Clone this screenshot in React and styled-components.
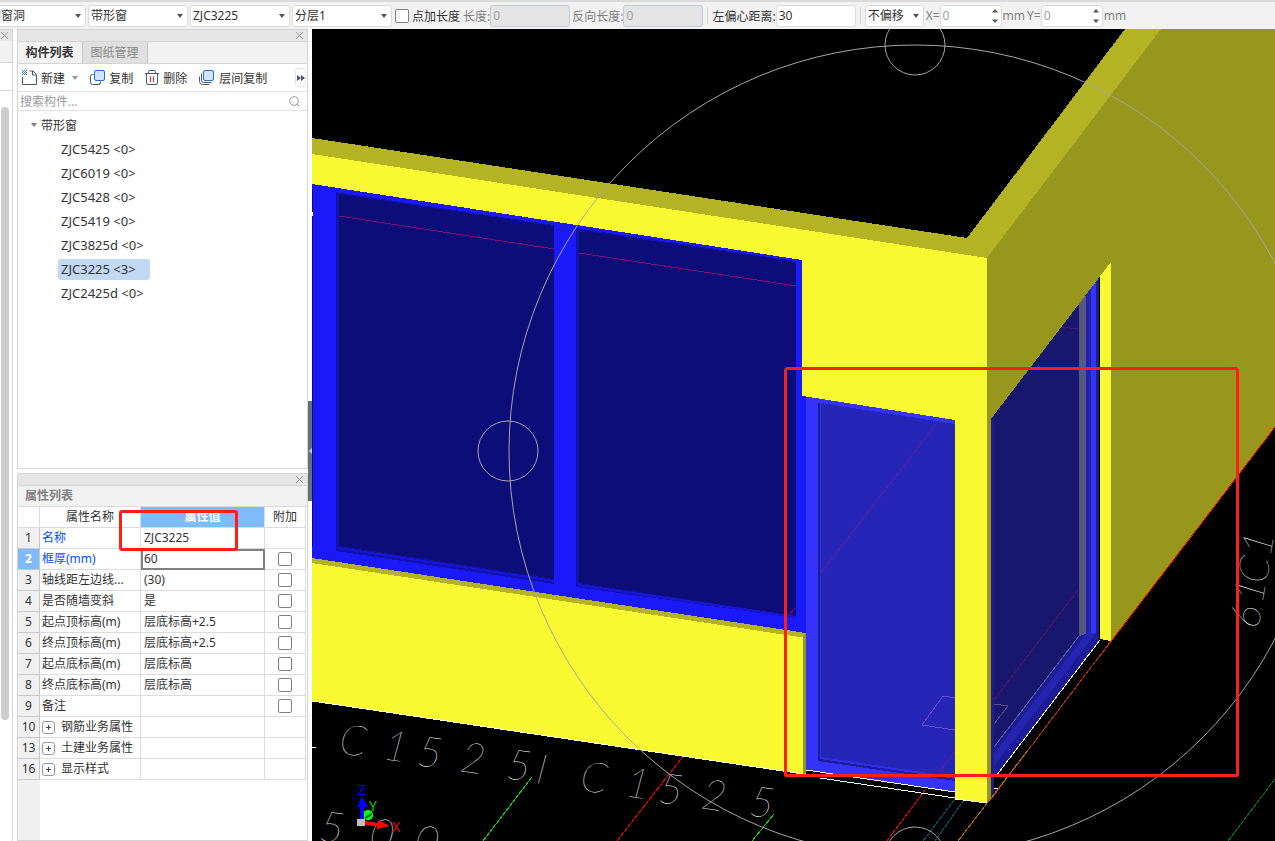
import {useState} from "react";
import styled, {createGlobalStyle} from "styled-components";

const GlobalStyle = createGlobalStyle`
    * {
        box-sizing: border-box;
    }

    body {
        margin: 0;
        overflow: hidden;
        background-color: #f2f2f2;
        color: #333;
    }

    body, button, input, select {
        font-family: "Noto Sans", "Noto Sans CJK SC", sans-serif;
        font-size: 12px;
    }

    button, input, select {
        color: inherit;
    }
`;

const Shell = styled.div`
    display: flex;
    flex-direction: column;
    height: 100vh;
    overflow: hidden;
`;

/* ---------- top bar ---------- */

const TopBar = styled.div`
    display: flex;
    align-items: center;
    flex: none;
    height: 29px;
    border-top: 2px solid #dadada;
    white-space: nowrap;
    overflow: hidden;
`;

const SelectBox = styled.div`
    position: relative;
    flex: none;
    width: ${(p) => (p.$compact ? 59 : 100)}px;
    margin-right: 2px;

    &:first-child {
        margin-left: -14px;
    }

    svg {
        position: absolute;
        right: 5px;
        top: 9px;
        pointer-events: none;
    }
`;

const Select = styled.select`
    appearance: none;
    width: 100%;
    height: 22px;
    padding: 0 2px;
    border: 1px solid #dcdcdc;
    border-radius: 3px;
    background-color: #fff;
`;

const CheckBox = styled.input`
    appearance: none;
    display: block;
    flex: none;
    width: 14px;
    height: 14px;
    margin: 0 auto;
    border: 1px solid #808080;
    border-radius: 2px;
    background-color: #fff;

    &:checked {
        background-color: #7fbafa;
    }
`;

const CheckLabel = styled.label`
    display: flex;
    align-items: center;
    gap: 3px;
    margin: 0 3px 0 1px;
`;

const Field = styled.label`
    display: flex;
    align-items: center;
    margin-right: 2px;
    color: ${(p) => (p.$muted ? "#808080" : "inherit")};
`;

const TextInput = styled.input`
    width: 80px;
    height: 22px;
    padding: 0 2px;
    border: 1px solid #dcdcdc;
    border-radius: 3px;
    background-color: #fff;

    &:disabled {
        border-color: #c3cad8;
        background-color: #e5e5e5;
        color: #a0a0a0;
    }
`;

const Spinner = styled.span`
    display: flex;
    align-items: center;
    justify-content: space-between;
    width: 62px;
    height: 22px;
    margin-right: 1px;
    padding-right: 3px;
    border: 1px solid #dcdcdc;
    border-radius: 3px;
    background-color: #fff;

    input {
        width: 40px;
        padding: 0 2px;
        border: 0;
        color: #a0a0a0;
        background: none;
    }
`;

const Divider = styled.span`
    width: 1px;
    height: 17px;
    margin: 0 4px 0 2px;
    background-color: #d4d4d4;
`;

const Caret = ({color = "#555"}) => (
    <svg width="6" height="4" viewBox="0 0 6 4"><path d="M0 0h6L3 4z" fill={color}/></svg>
);

const CloseIcon = () => (
    <svg width="7" height="7" viewBox="0 0 7 7"><path d="M0 0l7 7M7 0L0 7" stroke="#999"/></svg>
);

const DropDown = ({label, value, compact}) => (
    <SelectBox $compact={compact}>
        <Select aria-label={label} defaultValue={value}>
            <option>{value}</option>
        </Select>
        <Caret/>
    </SelectBox>
);

const OffsetField = ({axis}) => (
    <Field $muted>
        {axis}=
        <Spinner>
            <input defaultValue="0"/>
            <svg width="6" height="14" viewBox="0 0 6 14">
                <path d="M0 3.5h6L3 0zM0 10.5h6L3 14z" fill="#555"/>
            </svg>
        </Spinner>
        mm
    </Field>
);

const Toolbar = () => {
    const [addLength, setAddLength] = useState(false);

    return (
        <TopBar>
            <DropDown label="类别" value="门窗洞"/>
            <DropDown label="类型" value="带形窗"/>
            <DropDown label="构件" value="ZJC3225"/>
            <DropDown label="分层" value="分层1"/>
            <CheckLabel>
                <CheckBox type="checkbox" checked={addLength} onChange={() => setAddLength(!addLength)}/>
                点加长度
            </CheckLabel>
            <Field $muted>长度:<TextInput defaultValue="0" disabled={!addLength}/></Field>
            <Field $muted>反向长度:<TextInput defaultValue="0" disabled={!addLength}/></Field>
            <Divider/>
            <Field>左偏心距离:<TextInput defaultValue="30"/></Field>
            <Divider/>
            <DropDown label="偏移" value="不偏移" compact/>
            <OffsetField axis="X"/>
            <OffsetField axis="Y"/>
        </TopBar>
    );
};

/* ---------- side panels ---------- */

const Main = styled.div`
    display: flex;
    flex: 1;
    min-height: 0;
`;

const Strip = styled.div`
    display: flex;
    flex-direction: column;
    flex: none;
    width: 13px;
    border-right: 1px solid #d4d4d4;
    background-color: #fff;
`;

const StripTitle = styled.div`
    display: grid;
    place-items: center start;
    flex: none;
    height: 12px;
    padding-left: 1px;
    border-top: 1px solid #d4d4d4;
    background-color: #e6e6e6;
`;

const StripCell = styled.div`
    flex: none;
    height: ${(p) => p.$height}px;
    border-bottom: 1px solid #d4d4d4;
    background-color: ${(p) => p.$fill || "#fff"};
`;

const StripScroll = styled.div`
    flex: 1;
    margin: 16px 3px 121px 1px;
    border-radius: 4px;
    background-color: #cdcdcd;
`;

const Side = styled.div`
    display: flex;
    flex-direction: column;
    flex: none;
    gap: 4px;
    width: 295px;
    padding: 0 0 0 4px;
    background-color: #fff;
`;

const Panel = styled.section`
    position: relative;
    display: flex;
    flex-direction: column;
    min-height: 0;
    flex: ${(p) => p.$flex};
    border: 1px solid #d4d4d4;
    background-color: #fff;
`;

const PanelStrip = styled.div`
    display: flex;
    align-items: center;
    justify-content: flex-end;
    flex: none;
    height: 11px;
    padding-right: 4px;
    background-color: #e6e6e6;

    button {
        display: grid;
        padding: 0;
        border: 0;
        background: none;
    }
`;

const Tabs = styled.div`
    display: flex;
    flex: none;
    height: 23px;
    border-top: 1px solid #d4d4d4;
    border-bottom: 1px solid #d4d4d4;
    background-color: #f2f2f2;
`;

const Tab = styled.button`
    width: 65px;
    padding: 0 1px 1px 0;
    border: 0;
    border-right: 1px solid #c3c6cc;
    background-color: ${(p) => (p.$active ? "#f2f2f2" : "#e0e0e0")};
    color: ${(p) => (p.$active ? "#333" : "#888")};
    font-weight: ${(p) => (p.$active ? 700 : 400)};
`;

const Actions = styled.div`
    display: flex;
    align-items: center;
    flex: none;
    height: 28px;
    padding: 0 1px 0 4px;
    border-bottom: 1px solid #e2e2e2;
`;

const Action = styled.button`
    display: flex;
    align-items: center;
    gap: 4px;
    margin-right: 12px;
    padding: 0;
    border: 0;
    background: none;
    white-space: nowrap;
`;

const MoreButton = styled.button`
    display: grid;
    place-items: center;
    width: 11px;
    height: 19px;
    margin-left: auto;
    padding: 0;
    border: 1px solid #e6e6e6;
    border-radius: 3px;
    background: #fff;
`;

const Search = styled.label`
    display: flex;
    align-items: center;
    flex: none;
    height: 19px;
    padding: 0 7px 0 2px;
    border-bottom: 1px solid #e2e2e2;

    input {
        flex: 1;
        min-width: 0;
        padding: 0;
        border: 0;
        outline: 0;
    }

    input::placeholder {
        color: #999;
    }
`;

const Tree = styled.ul`
    flex: 1;
    margin: 0;
    padding: 2px 0 0 13px;
    list-style: none;
    overflow: hidden;
`;

const TreeGroup = styled.li`
    display: flex;
    align-items: center;
    gap: 4px;
    height: 24px;
`;

const TreeItem = styled.li`
    display: flex;
    align-items: center;
    height: 24px;
    padding-left: 27px;

    button {
        width: ${(p) => (p.$selected ? "92px" : "auto")};
        height: 21px;
        padding: 0 3px;
        border: 0;
        border-radius: 3px;
        background-color: ${(p) => (p.$selected ? "#c1d9f2" : "transparent")};
        font-size: 13px;
        text-align: left;
    }
`;

const PanelTitle = styled.h2`
    flex: none;
    height: 21px;
    margin: 0;
    padding-left: 7px;
    border-top: 1px solid #d4d4d4;
    background-color: #f2f2f2;
    color: #808080;
    font-size: 12px;
    line-height: 20px;
`;

const TableArea = styled.div`
    flex: 1;
    min-height: 0;
    overflow: hidden;
    border-top: 1px solid #dcdcdc;
    background: linear-gradient(to right, #f0f0f0 22px, #fff 22px);
`;

const Table = styled.table`
    width: 288px;
    table-layout: fixed;
    border-collapse: separate;
    border-spacing: 0;

    th, td {
        height: 21px;
        padding: 0 0 0 3px;
        border-right: 1px solid #dcdcdc;
        border-bottom: 1px solid #dcdcdc;
        font-weight: 400;
        line-height: 18px;
        text-align: left;
        white-space: nowrap;
        overflow: hidden;
    }

    td:nth-child(2) {
        padding-left: 2px;
    }

    thead th, td:last-child {
        padding: 0;
        text-align: center;
    }

    thead th {
        background-color: #fff;
    }

    thead th:nth-child(3) {
        background-color: #7fbafa;
        color: #fff;
        font-weight: 700;
    }
`;

const NumberCell = styled.th`
    && {
        padding: 0;
        border-color: #c8c8c8;
        background-color: ${(p) => (p.$selected ? "#7fbafa" : "#f0f0f0")};
        color: ${(p) => (p.$selected ? "#fff" : "#333")};
        font-weight: ${(p) => (p.$selected ? 700 : 400)};
        text-align: center;
    }
`;

const NameCell = styled.td`
    color: ${(p) => (p.$blue ? "#0050ff" : "inherit")};
`;

const ValueCell = styled.td`
    outline: ${(p) => (p.$editing ? "2px solid #808080" : "none")};
    outline-offset: -2px;
`;

const GroupName = styled.span`
    display: flex;
    align-items: center;
    gap: 6px;

    button {
        display: grid;
        place-items: center;
        width: 13px;
        height: 13px;
        padding: 0;
        border: 1px solid #999;
        border-radius: 3px;
        background: #fff;
    }
`;

const HeaderName = styled.span`
    display: block;
    text-align: right;
    padding-right: 26px;
`;

const Marker = styled.div`
    position: absolute;
    left: 101px;
    top: 36px;
    width: 119px;
    height: 41px;
    border: 3px solid #ff2014;
    border-radius: 3px;
    pointer-events: none;
`;

const Handle = styled.div`
    display: flex;
    align-items: center;
    flex: none;
    width: 4px;
    background-color: #fff;

    button {
        display: grid;
        place-items: center end;
        width: 4px;
        height: 100px;
        margin-top: 32px;
        padding: 0;
        border: 0;
        background-color: #67707a;
    }
`;

const items = [
    {name: "ZJC5425", count: 0},
    {name: "ZJC6019", count: 0},
    {name: "ZJC5428", count: 0},
    {name: "ZJC5419", count: 0},
    {name: "ZJC3825d", count: 0},
    {name: "ZJC3225", count: 3},
    {name: "ZJC2425d", count: 0}
];

const properties = [
    {no: 1, name: "名称", value: "ZJC3225", blue: true},
    {no: 2, name: "框厚(mm)", value: "60", blue: true, check: true},
    {no: 3, name: "轴线距左边线...", value: "(30)", check: true},
    {no: 4, name: "是否随墙变斜", value: "是", check: true},
    {no: 5, name: "起点顶标高(m)", value: "层底标高+2.5", check: true},
    {no: 6, name: "终点顶标高(m)", value: "层底标高+2.5", check: true},
    {no: 7, name: "起点底标高(m)", value: "层底标高", check: true},
    {no: 8, name: "终点底标高(m)", value: "层底标高", check: true},
    {no: 9, name: "备注", value: "", check: true},
    {no: 10, name: "钢筋业务属性", value: "", group: true},
    {no: 13, name: "土建业务属性", value: "", group: true},
    {no: 16, name: "显示样式", value: "", group: true}
];

const NewIcon = () => (
    <svg width="15" height="16" viewBox="0 0 15 16" fill="none">
        <path d="M.5 7v7.5h14V4.5L11 1H7.5M10.5 1v4h4" stroke="#4d5666" strokeLinejoin="round"/>
        <path d="M0 .5h5M0 2.5h5M0 4.5h5" stroke="#2a7de1" strokeDasharray="1 1"/>
        <path d="M1 1.5h4M1 3.5h4" stroke="#2a7de1" strokeDasharray="1 1"/>
    </svg>
);

const CopyIcon = () => (
    <svg width="15" height="16" viewBox="0 0 15 16" fill="none">
        <path d="M3.500 4.500h-1q-2 0-2 2v6q0 2 2 2h6q1.500 0 2-2" stroke="#4d5666"/>
        <rect x="4.500" y=".5" width="10" height="10" rx="1.500" fill="#d3e4fa" stroke="#1673e6"/>
        <path d="M6.500 14.500h2q2 0 2-2v-1" stroke="#4d5666"/>
    </svg>
);

const DeleteIcon = () => (
    <svg width="14" height="16" viewBox="0 0 14 16" fill="none">
        <path d="M0 3.500h14M3.500 3V1.500q0-1 1-1h5q1 0 1 1V3M1.500 4v9q0 1.500 1.500 1.500h8q1.500 0 1.500-1.500V4"
              stroke="#4d5666"/>
        <path d="M5.500 6.500v5.500M8.500 6.500v5.500" stroke="#e0202a"/>
    </svg>
);

const LayerCopyIcon = () => (
    <svg width="16" height="16" viewBox="0 0 16 16" fill="none">
        <rect x="4.500" y=".5" width="10" height="10" rx="1.500" fill="#d3e4fa" stroke="#1673e6"/>
        <path d="M2.500 3.500v7q0 2 2 2h8M.5 6.500v5q0 3 3 3h7" stroke="#4d5666"/>
    </svg>
);

const ComponentPanel = () => {
    const [selected, setSelected] = useState("ZJC3225");

    return (
        <Panel $flex="0 1 440px">
            <PanelStrip>
                <button aria-label="关闭"><CloseIcon/></button>
            </PanelStrip>
            <Tabs>
                <Tab $active>构件列表</Tab>
                <Tab>图纸管理</Tab>
            </Tabs>
            <Actions>
                <Action><NewIcon/>新建&nbsp;<Caret color="#999"/></Action>
                <Action><CopyIcon/>复制</Action>
                <Action><DeleteIcon/>删除</Action>
                <Action><LayerCopyIcon/>层间复制</Action>
                <MoreButton aria-label="更多">
                    <svg width="8" height="6" viewBox="0 0 8 6">
                        <path d="M0 0l4 3-4 3zM4 0l4 3-4 3z" fill="#4d5666"/>
                    </svg>
                </MoreButton>
            </Actions>
            <Search>
                <input placeholder="搜索构件..." aria-label="搜索构件"/>
                <svg width="11" height="11" viewBox="0 0 11 11" fill="none" stroke="#999">
                    <circle cx="5" cy="5" r="4.300"/>
                    <path d="M8 8l2.500 2.500"/>
                </svg>
            </Search>
            <Tree>
                <TreeGroup><Caret color="#808080"/>带形窗</TreeGroup>
                {items.map((item) => (
                    <TreeItem key={item.name} $selected={item.name === selected}>
                        <button onClick={() => setSelected(item.name)}>{item.name} &lt;{item.count}&gt;</button>
                    </TreeItem>
                ))}
            </Tree>
        </Panel>
    );
};

const PropertyPanel = () => (
    <Panel $flex="1">
        <PanelStrip>
            <button aria-label="关闭"><CloseIcon/></button>
        </PanelStrip>
        <PanelTitle>属性列表</PanelTitle>
        <TableArea>
            <Table>
                <colgroup>
                    <col width="22"/>
                    <col width="101"/>
                    <col width="124"/>
                    <col width="41"/>
                </colgroup>
                <thead>
                    <tr>
                        <th/>
                        <th><HeaderName>属性名称</HeaderName></th>
                        <th>属性值</th>
                        <th>附加</th>
                    </tr>
                </thead>
                <tbody>
                    {properties.map((p) => (
                        <tr key={p.no}>
                            <NumberCell $selected={p.no === 2}>{p.no}</NumberCell>
                            <NameCell $blue={p.blue}>
                                {p.group ?
                                    <GroupName>
                                        <button aria-label="展开">
                                            <svg width="5" height="5" viewBox="0 0 5 5">
                                                <path d="M0 2.500h5M2.500 0v5" stroke="#444"/>
                                            </svg>
                                        </button>
                                        {p.name}
                                    </GroupName> : p.name}
                            </NameCell>
                            <ValueCell $editing={p.no === 2}>{p.value}</ValueCell>
                            <td>{p.check ? <CheckBox type="checkbox" aria-label={p.name}/> : null}</td>
                        </tr>
                    ))}
                </tbody>
            </Table>
        </TableArea>
        <Marker/>
    </Panel>
);

/* ---------- 3D view ---------- */

const Viewport = styled.main`
    flex: 1;
    min-width: 0;
    background-color: #000;

    svg {
        display: block;
        width: 100%;
        height: 100%;
    }
`;

const FloorText = styled.text`
    font-family: Lato, sans-serif;
    font-size: 42px;
    font-weight: 100;
    font-style: italic;
    fill: #fff;
`;

const AxisText = styled.text`
    font-family: "Open Sans", sans-serif;
    font-size: 14px;
    fill: ${(p) => p.$color};
`;

const Line = ({d, color}) => <path d={d} stroke={color} fill="none"/>;

const Scene = () => (
    <svg viewBox="312 29 963 812" preserveAspectRatio="xMinYMin slice" shapeRendering="crispEdges">
        {/* floor lettering and axis lines */}
        <FloorText x="338 382 416 459 505 535" y="753 759 765 771 778 783" rotate="8">C1525I</FloorText>
        <FloorText x="579 624 657 700 748" y="790 796 802 808 815" rotate="8">C1525</FloorText>
        <FloorText x="318 368 413" y="840 847 854" rotate="8">500</FloorText>
        <FloorText x="1258 1262 1266 1270" y="630 605 585 558" rotate="-80">61C1</FloorText>
        <Line d="M312 747.5h4" color="#fff"/>
        <Line d="M532 777L483 841M774 814L752 841" color="#0d0"/>
        <Line d="M684 755L617 841M926 789L887 841" color="#e00000"/>
        <Line d="M955 799L923 841M964 800L935 841" color="#08506c"/>
        <Line d="M1275 779L1228 841" color="#007800"/>

        {/* roof slab and walls */}
        <path d="M312 138L967 238L1125 29H1161L987 258L312 154z" fill="#b3b323"/>
        <path d="M312 154L987 258V803L955 799V750L806 730V774L312 701z" fill="#f9f931"/>
        <path d="M987 258L1161 29H1275V427L1111 641V262L991 419V799L987 803z" fill="#97971d"/>
        <Line d="M1275 427L1028 750" color="#f01000"/>
        <Line d="M1028 750L958 841" color="#b86a08"/>
        <Line d="M312 701L803 774" color="#fff"/>

        {/* wide window */}
        <path d="M312 184L802 260V396L806 397V634L312 558z" fill="#1919fa"/>
        <path d="M312 558L806 633V638L312 563z" fill="#b3b323"/>
        <path d="M803 636L806 634V773L803 774z" fill="#97971d"/>
        <path d="M312 189h1V546H312z" fill="#0d0d7a"/>
        <path d="M336 192L554 225V584L336 551zM576 228L796 261V618L576 587z" fill="#1212aa"/>
        <path d="M338 547L554 580V582L338 549zM578 584L796 616V618L578 586z" fill="#1616d8"/>
        <path d="M339 194L554 226V579L339 546zM579 230L796 262V616L579 583z" fill="#0d0d7a"/>
        <Line d="M339 216L554 249M579 253L796 286M789 615L795 608" color="#850b73"/>
        <path d="M312 212h1v4H312z" fill="#fff"/>

        {/* corner window, front face */}
        <path d="M803 396L955 420V792L806 770V397z" fill="#3333fa"/>
        <path d="M802 396H806V633L802 633z" fill="#1919fa"/>
        <path d="M818 403L955 424V781L818 761z" fill="#1c1c98"/>
        <path d="M820 403L955 424V779L820 759z" fill="#3030e4"/>
        <path d="M821 403L955 424V777L821 757z" fill="#2525b8"/>
        <Line d="M937 423L820 574M955 751L937 776" color="#601ca0"/>
        <Line d="M955 698L943 696L922 725L955 730" color="#6a50c4"/>
        <Line d="M806 770L955 792M820 778L955 798" color="#fff"/>
        <path d="M955 419L987 424V803L955 799z" fill="#f9f931"/>
        <Line d="M955 799L987 803" color="#fff"/>

        {/* corner window, side face */}
        <path d="M991 419L1099 278V640L991 797z" fill="#1c1c94"/>
        <path d="M994 415L1079 304V636L994 747z" fill="#17176e"/>
        <path d="M1079 304L1086 295V634L1079 636z" fill="#58587e"/>
        <path d="M1086 295L1091 288V634L1086 640z" fill="#2222ac"/>
        <path d="M1091 288L1096 282V634H1091z" fill="#3333fa"/>
        <path d="M1087 633H1096L994 766V754z" fill="#2424b0"/>
        <path d="M994 778L1100 640V660L991 802L994 797z" fill="#000"/>
        <Line d="M1111 641L991 799" color="#c03008"/>
        <Line d="M1028 750L958 841" color="#b86a08"/>
        <Line d="M1079 636L994 747" color="#5a5a9c"/>
        <Line d="M1062 327L1078 329M1078 590L994 700" color="#561468"/>
        <Line d="M994 704L1008 706L994 724" color="#604880"/>
        <Line d="M1100 640L996 776M994 788.5h4" color="#fff"/>
        <path d="M1100 276L1111 262V641L1100 639z" fill="#f9f931"/>

        {/* orbit ring */}
        <g fill="none" stroke="#a6a6a6" shapeRendering="auto">
            <circle cx="915" cy="451" r="406"/>
            <circle cx="915" cy="45" r="30"/>
            <circle cx="508" cy="451" r="30"/>
            <circle cx="915" cy="857" r="30"/>
        </g>

        {/* axis gizmo */}
        <circle cx="368" cy="815" r="5" fill="#0f0"/>
        <path d="M365 818L372 814" stroke="#060" strokeWidth="2"/>
        <path d="M360 820V807H357L362 796L368 807H364V820z" fill="#00f"/>
        <path d="M364 821L378 823V820L390 826L377 829V826L364 825z" fill="#f00"/>
        <path d="M357 819h8v7h-8z" fill="#c0c0c0"/>
        <AxisText x="358" y="795" $color="#0000ff">Z</AxisText>
        <AxisText x="369" y="811" $color="#00dd00">Y</AxisText>
        <AxisText x="392" y="832" $color="#ff0000">X</AxisText>

        <rect x="785.500" y="368.500" width="452" height="407" rx="2" fill="none" stroke="#ff2014" strokeWidth="3"/>
    </svg>
);

const App = () => (
    <>
        <GlobalStyle/>
        <Shell>
            <Toolbar/>
            <Main>
                <Strip>
                    <StripTitle><CloseIcon/></StripTitle>
                    <StripCell $height={22} $fill="#f2f2f2"/>
                    <StripCell $height={28}/>
                    <StripScroll/>
                </Strip>
                <Side>
                    <ComponentPanel/>
                    <PropertyPanel/>
                </Side>
                <Handle>
                    <button aria-label="收起">
                        <svg width="3" height="6" viewBox="0 0 3 6"><path d="M3 0v6L0 3z" fill="#ccc"/></svg>
                    </button>
                </Handle>
                <Viewport><Scene/></Viewport>
            </Main>
        </Shell>
    </>
);

export default App;
